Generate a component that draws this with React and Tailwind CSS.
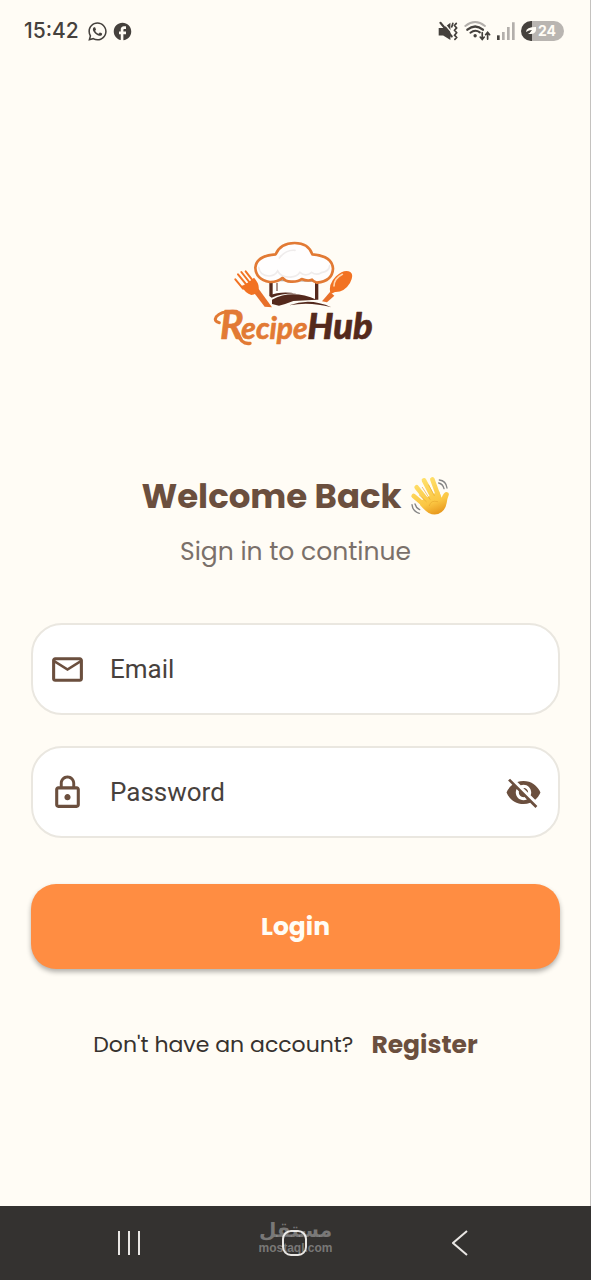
import { useState } from 'react'
import { FaWhatsapp } from 'react-icons/fa'
import { MdFacebook, MdLockOutline, MdMailOutline, MdVisibility, MdVisibilityOff } from 'react-icons/md'

function MutedIcon() {
  return (
    <svg viewBox="58 62 58 58" className="w-5 h-5" fill="none" stroke="#45413d" strokeLinecap="round">
      <path d="M60 82h14l20-15v50L73 104H60z" fill="#45413d" stroke="none" />
      <path d="M72 64l28 34" stroke="#fffcf5" strokeWidth="4" />
      <path d="M65 67l33 40" strokeWidth="6" />
      <path d="M111 69l-5 6 6 7-6 7 6 7-6 7 6 7-5 5M101 69l-3 10" strokeWidth="5" />
    </svg>
  )
}

function WifiIcon() {
  return (
    <svg viewBox="132 62 80 58" className="w-[27px] h-5" fill="none" strokeLinecap="round">
      <path d="M136 76q29-23 58 0" stroke="#b3afab" strokeWidth="6" />
      <path d="M142 87q23-19 46 0" stroke="#45413d" strokeWidth="7" />
      <path d="M151 96q14-11 28-1" stroke="#45413d" strokeWidth="6" />
      <circle cx="165" cy="105" r="5" fill="#45413d" />
      <path d="M186 96v19m-6-6l6 7 6-7M202 115V95m-6 7l6-7 6 7" stroke="#45413d" strokeWidth="5" />
    </svg>
  )
}

function SignalIcon() {
  return (
    <svg viewBox="230 62 54 58" className="w-[18px] h-5" fill="none" strokeWidth="8">
      <path d="M234 104v14" stroke="#45413d" />
      <path d="M249 94v24M264 79v39M279 65v53" stroke="#b3afab" />
    </svg>
  )
}

function StatusBar() {
  return (
    <header className="h-[62px] flex items-center justify-between pl-6 pr-[26px] text-[#45413d] font-['Inter',sans-serif]">
      <div className="flex items-center gap-2">
        <span className="text-[21px] leading-6 font-medium">15:42</span>
        <div className="flex items-center gap-1">
          <FaWhatsapp size={21} />
          <MdFacebook size={21} />
        </div>
      </div>
      <div className="flex items-center gap-[6px]">
        <MutedIcon />
        <WifiIcon />
        <SignalIcon />
        <div className="w-[43px] h-5 rounded-full overflow-hidden flex items-center bg-linear-to-r from-[#45413d] from-25% to-[#b9b5b1] to-25%">
          <svg viewBox="0 0 12 12" className="w-3 h-3 ml-1" fill="#fffcf5">
            <path d="M1 7Q1 2 11 2Q12 9 6 9L3 9Q5 8 7 5Q4 5 1 7z" />
          </svg>
          <span className="ml-px text-[14px] leading-5 font-bold text-[#fffcf5]">24</span>
        </div>
      </div>
    </header>
  )
}

function Logo() {
  return (
    <svg viewBox="3 0 570 390" className="w-[190px] h-[130px]" role="img" aria-label="RecipeHub">
      {/* fork */}
      <path d="M160 186l14-12 42 58-22-2z" fill="#e8702a" />
      <path d="M124 168q14-4 38-25 20 22 12 40-8 12-20 12-18-5-30-27z" fill="#f27222" />
      <path
        d="M106 148l23 28M114 133l30 37M124 126l27 34M137 124l26 34"
        stroke="#f27222"
        strokeWidth="6"
        strokeLinecap="round"
      />
      {/* spoon */}
      <path d="M390 186l13 11-22 20-15-3z" fill="#e8702a" />
      <path d="M391 193q-7-31 17-54 25-23 43-13 12 8-1 33-17 28-45 27z" fill="#f27222" />
      <path d="M402 168q0-22 25-35" stroke="#ffd5ac" strokeWidth="5" fill="none" strokeLinecap="round" />
      {/* hat band */}
      <path d="M214 145h135v60q-65-25-135-7z" fill="#fffefb" />
      <path d="M213 139v58M350 139v70" stroke="#54291c" strokeWidth="10" />
      <path d="M231 159v24" stroke="#54291c" strokeWidth="3" />
      <path d="M233 152q55-1 110 2" stroke="#b5a8a0" strokeWidth="4" fill="none" />
      <path d="M207 197q37-16 84-6-42-2-76 12z" fill="#54291c" />
      <path d="M216 209q60-32 134 0l-70 4q-22 9-43 14l-21-5z" fill="#54291c" />
      <path d="M268 226q62-24 126 6-65-18-126-6z" fill="#54291c" />
      {/* hat top */}
      <path
        d="M209 156q-42-9-43-43 3-36 61-40 14-34 57-34 41 0 53 34 60 5 62 43-2 38-48 42-12-4-15-9-12 6-31-2-10 9-32 8-18-1-25-12-17 14-39 13z"
        fill="#fffefe"
        stroke="#e27a34"
        strokeWidth="8"
        strokeLinejoin="round"
      />
      <path
        d="M176 112q4 25 31 26 17 0 26-15 10 19 34 18 22 2 33-14 17 15 35 0 14 10 29 1 24-4 25-21M238 84q20-26 47-23"
        fill="none"
        stroke="#efecec"
        strokeWidth="5"
        strokeLinecap="round"
      />
      {/* wordmark */}
      <path d="M58 278q-18-4-9-18 15-19 60-16" fill="none" stroke="#e27a34" strokeWidth="9" strokeLinecap="round" />
      <path d="M114 312q10 32 36 28" fill="none" stroke="#e27a34" strokeWidth="10" strokeLinecap="round" />
      <g className="font-['Lato',sans-serif] italic font-bold" strokeWidth="2" strokeLinejoin="round">
        <text x="60" y="327" fontSize="118" fill="#e27a34" stroke="#e27a34">R</text>
        <text x="124" y="327" fontSize="90" fill="#e27a34" stroke="#e27a34">ecipe</text>
        <text x="322" y="328" fontSize="109" className="font-black" fill="#54291c" stroke="#54291c">Hub</text>
      </g>
    </svg>
  )
}

function WavingHand() {
  return (
    <svg viewBox="0 0 120 120" className="w-10 h-10" role="img" aria-label="Waving hand">
      <defs>
        <linearGradient id="skin" gradientUnits="userSpaceOnUse" x1="30" y1="10" x2="70" y2="115">
          <stop offset="0" stopColor="#ffe16c" />
          <stop offset="0.7" stopColor="#fbc642" />
          <stop offset="1" stopColor="#e99c20" />
        </linearGradient>
      </defs>
      <g stroke="url(#skin)" strokeWidth="14" strokeLinecap="round">
        <path d="M11 60l33 28M20 34l34 43M42 13l27 52M67 10l18 50" />
      </g>
      <path
        d="M35 73l52-28q5 13 8 20 6-17 15-17 10 1 5 13-3 6-5 20-3 18-15 27-18 14-39 3-10-6-26-24z"
        fill="url(#skin)"
      />
      <path
        d="M28 57l21 20M37 34l23 36M56 27l17 32M58 89q4-18 25-12"
        fill="none"
        stroke="#e8a92f"
        strokeWidth="2"
        strokeLinecap="round"
      />
      <path
        d="M88 12q20 2 23 24M86 21q13 3 16 17M6 86q2 20 22 26M15 84q3 12 14 17"
        fill="none"
        stroke="#858585"
        strokeWidth="4"
        strokeLinecap="round"
      />
    </svg>
  )
}

const FIELD = 'h-[92px] flex items-center px-4 rounded-[31px] border-2 border-[#eae7e0] bg-white text-[#6b4f3e]'
const INPUT = "flex-1 min-w-0 bg-transparent outline-none font-['Roboto',sans-serif] text-[26px] leading-8 text-[#47413d] placeholder:text-[#47413d]"

function LoginForm() {
  const [showPassword, setShowPassword] = useState(false)

  return (
    <form className="mt-[55px] flex flex-col" onSubmit={(e) => e.preventDefault()}>
      <div className={FIELD}>
        <label htmlFor="email" className="mr-6" aria-label="Email">
          <MdMailOutline size={37} />
        </label>
        <input id="email" type="email" placeholder="Email" className={INPUT} />
      </div>
      <div className={`${FIELD} mt-[31px]`}>
        <label htmlFor="password" className="mr-6" aria-label="Password">
          <MdLockOutline size={37} />
        </label>
        <input id="password" type={showPassword ? 'text' : 'password'} placeholder="Password" className={INPUT} />
        <button type="button" aria-label="Toggle password" onClick={() => setShowPassword(!showPassword)}>
          {showPassword ? <MdVisibility size={37} /> : <MdVisibilityOff size={37} />}
        </button>
      </div>
      <button
        type="submit"
        className="mt-[46px] h-[85px] rounded-[25px] bg-[#ff8d42] text-[#fffcf5] text-[25px] leading-8 font-bold shadow-[0_3px_5px_rgba(0,0,0,0.3)]"
      >
        Login
      </button>
    </form>
  )
}

function NavBar() {
  return (
    <nav className="h-[74px] grid grid-cols-3 px-[46px] bg-[#343230] text-[#e9e7e4]">
      <button aria-label="Recent apps" className="flex items-center justify-center">
        <svg viewBox="0 0 24 24" className="w-6 h-6" stroke="currentColor" strokeWidth="2">
          <path d="M2 0v24M12 0v24M22 0v24" />
        </svg>
      </button>
      <button aria-label="Home" className="relative flex items-center justify-center">
        <svg viewBox="0 0 26 26" className="w-[26px] h-[26px]" fill="none" stroke="currentColor" strokeWidth="2">
          <rect x="1" y="1" width="23" height="24" rx="8" />
        </svg>
        <span className="absolute inset-x-0 top-3 flex flex-col items-center text-white/35 font-bold">
          <span lang="ar" dir="rtl" className="font-['DejaVu_Sans',sans-serif] text-[20px] leading-6">مستقل</span>
          <span className="font-['Liberation_Sans',sans-serif] text-[12px] leading-3">mostaql.com</span>
        </span>
      </button>
      <button aria-label="Back" className="flex items-center justify-center">
        <svg viewBox="0 0 20 26" className="w-5 h-[26px]" fill="none" stroke="currentColor" strokeWidth="2">
          <path d="M15 1L1 13l14 12" />
        </svg>
      </button>
    </nav>
  )
}

export default function App() {
  return (
    <div className="min-h-screen flex flex-col bg-[#fffcf5] font-['Poppins','Inter',sans-serif]">
      <div className="flex-1 flex flex-col border-r border-[#c4c2bf]">
        <StatusBar />
        <main className="flex-1 pl-[31px] pr-[30px] pt-[168px]">
          <div className="flex justify-center">
            <Logo />
          </div>
          <div className="mt-[114px] flex items-center justify-center gap-2 text-[#6b4f3e]">
            <h1 className="text-[34px] leading-[44px] font-bold">Welcome Back</h1>
            <WavingHand />
          </div>
          <p className="mt-[18px] text-center text-[25px] leading-8 text-[#7a706a]">Sign in to continue</p>
          <LoginForm />
          <div className="mt-[60px] flex items-center justify-center gap-[18px] pr-5">
            <span className="text-[22px] leading-8 text-[#37322e]">Don't have an account?</span>
            <a href="#register" className="text-[25px] leading-8 font-bold text-[#6b4f3e]">Register</a>
          </div>
        </main>
      </div>
      <NavBar />
    </div>
  )
}
